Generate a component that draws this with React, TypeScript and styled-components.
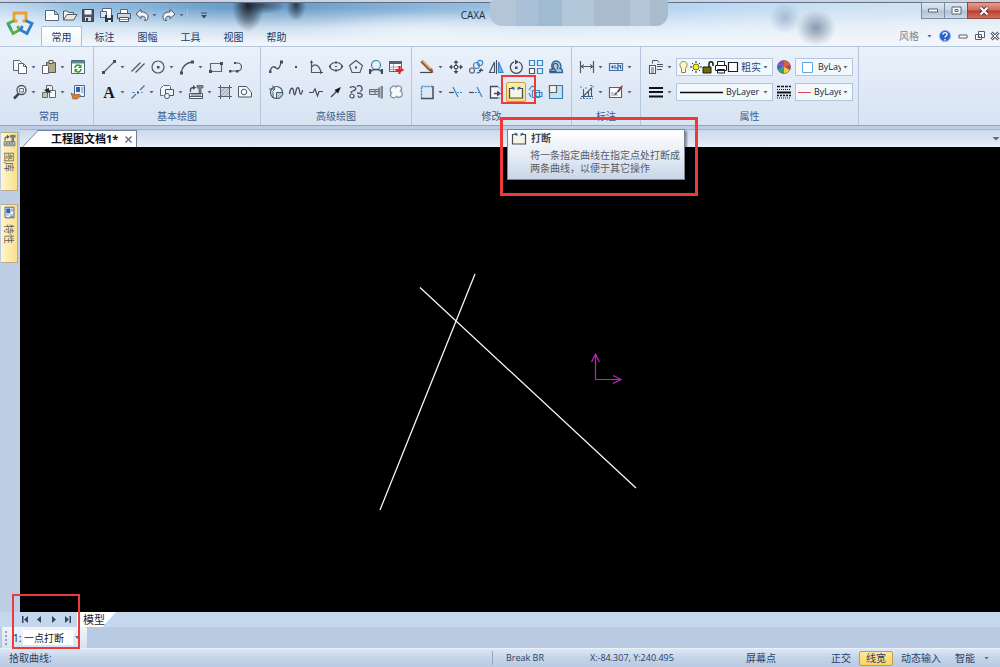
import React from 'react';
import styled, { createGlobalStyle, css } from 'styled-components';

const GlobalStyle = createGlobalStyle`
  *, *::before, *::after { box-sizing: border-box; }
  html, body, #root { margin: 0; padding: 0; }
  body { background: #bccde4; }
  body, button, select {
    font-family: "Open Sans", "Noto Sans CJK SC", sans-serif;
    font-size: 10px;
    line-height: 14px;
    color: #2b4166;
  }
  button, select { margin: 0; padding: 0; border: 0; background: none; }
`;

const ink = '#434c58';
const blue = '#3a86ca';

/* ---------- icon drawings, 16 x 16 ---------- */

const icons: Record<string, React.ReactNode> = {
  newFile: (
    <path d="M1.5 3.5h9l4 4v6h-13zM10.5 3.5v4h4" fill="#fff" stroke="#59677c" />
  ),
  open: (
    <>
      <path d="M1.5 13V4h4l1 1.500h5V8" fill="#f4f4f0" stroke="#4f5a68" />
      <path d="M1.500 13L5 7.500h10L11.500 13z" fill="#e9e9e2" stroke="#4f5a68" />
    </>
  ),
  save: (
    <>
      <path d="M2.500 2.500h11v12h-11z" fill="#4c5564" stroke="#39424f" />
      <path d="M4.500 3h7v4.500h-7z" fill="#f3f5f8" />
      <path d="M5 10h6v4H5z" fill="#d4d9e0" />
      <path d="M6 11h2v3H6z" fill="#39424f" />
    </>
  ),
  saveAs: (
    <>
      <path d="M4.500 1.500h9v8h-9z" fill="#fff" stroke="#59677c" />
      <path d="M2.500 4.500h6v6h-6z" fill="#dfe5ec" stroke="#59677c" />
      <path d="M7 8h8v7H7z" fill="#2d3849" />
      <path d="M9 8h4v3H9zM10 13h3v2h-3z" fill="#e8edf4" />
    </>
  ),
  print: (
    <>
      <path d="M4.500 6V2.500h7V6" fill="#fff" stroke="#5b6573" />
      <path d="M1.500 6.500h13v5h-13z" fill="#cfd6de" stroke="#4b5563" />
      <path d="M3.500 10.500h9v4h-9z" fill="#fff" stroke="#4b5563" />
      <path d="M4 12h8v1H4z" fill="#36a9c6" />
    </>
  ),
  undo: (
    <path d="M2 7l5-4.500v2.500c4 0 7 1.500 7 5 0 1.500-.5 3-2 3.500h-1.500c1-1 1.200-2 .5-3-1-1.200-2-1.300-4-1.300v2.300z" fill="#f2f6fa" stroke="#49566a" />
  ),
  redo: (
    <path d="M14 7L9 2.500V5C5 5 2 6.500 2 10c0 1.500.5 3 2 3.500h1.500c-1-1-1.200-2-.5-3 1-1.200 2-1.300 4-1.300v2.300z" fill="#f2f6fa" stroke="#49566a" />
  ),
  copy: (
    <>
      <path d="M1.500 1.500h6l2 2v8h-8z" fill="#f5f8fc" stroke="#5e6670" />
      <path d="M6.500 4.500h5l3 3v7h-8z" fill="#fff" stroke="#5e6670" />
      <path d="M11.500 4.500v3h3" fill="none" stroke="#5e6670" />
    </>
  ),
  paste: (
    <>
      <path d="M5.500 3.500h9v10h-9z" fill="#b5a98c" stroke="#5d564a" />
      <path d="M8 1.500h4v3H8z" fill="#e9e6dc" stroke="#5d564a" />
      <path d="M1.500 6.500h5l1 1v7h-6z" fill="#fff" stroke="#5e6670" />
    </>
  ),
  refresh: (
    <>
      <path d="M1.500 1.500h13v13h-13z" fill="#fff" stroke="#4f6a78" />
      <path d="M2 2h12v2.500H2z" fill="#5e8593" />
      <path d="M5 9a3 3 0 0 1 5-2.200M11 10a3 3 0 0 1-5 2.200" fill="none" stroke="#20a02c" strokeWidth="1.600" />
      <path d="M11.500 5v4H8zM4.500 14v-4H8z" fill="#20a02c" />
    </>
  ),
  zoom: (
    <>
      <path d="M7 9.500L2 14.500" stroke="#3c4148" strokeWidth="2.500" />
      <circle cx="9.500" cy="6" r="4.500" fill="#eef4fa" stroke="#4b5057" strokeWidth="1.300" />
      <path d="M7.500 4.500h4v3.500h-4z" fill="none" stroke="#6b7078" />
    </>
  ),
  moveBlock: (
    <>
      <path d="M5.500 1.500h5l1 1.500v5h-6z" fill="#f1eee6" stroke="#5e6670" />
      <path d="M1.500 8.500h5v5h-5z" fill="#c8c0ad" stroke="#5e6670" />
      <path d="M8.500 6.500h6v7h-6z" fill="#fff" stroke="#5e6670" />
      <path d="M3 6l5-2v2l3 3-3-1-1 1z" fill="#24282e" />
    </>
  ),
  brush: (
    <>
      <path d="M4.500 1.500h10v11h-10z" fill="#eaf2fc" stroke="#4b6a98" />
      <path d="M6 3h4v5H6z" fill="#2f65b0" />
      <path d="M11 4h2.500M11 6h2.500M11 8h2.500" stroke="#6a86b0" />
      <path d="M1 9l4 2 4-1 2 2-4 3H3z" fill="#d98032" stroke="#8a4a14" strokeWidth=".6" />
    </>
  ),
  line: (
    <>
      <path d="M2.500 13.500l11-11" stroke="#5e6977" strokeWidth="1.300" />
      <path d="M1 12h3v3H1zM12 1h3v3h-3z" fill={ink} />
    </>
  ),
  parallel: (
    <path d="M1.500 12.500l9-9M5.500 13.500l9-9" stroke="#4d5866" strokeWidth="1.300" />
  ),
  circle: (
    <>
      <circle cx="8" cy="8" r="6" fill="none" stroke="#4d5866" strokeWidth="1.200" />
      <path d="M7 7h2.500v2.500H7z" fill={ink} />
    </>
  ),
  arc: (
    <>
      <path d="M2 14C3 8 7 4 13 3" fill="none" stroke="#4d5866" strokeWidth="1.300" />
      <path d="M1 12.500h3v3H1zM12 1.500h3v3h-3z" fill={ink} />
    </>
  ),
  rect: (
    <>
      <path d="M2.500 4.500h11v8h-11z" fill="#e6ecf3" stroke="#5e6977" strokeWidth="1.200" />
      <path d="M1 11h3v3H1zM12 3h3v3h-3z" fill={ink} />
    </>
  ),
  polyline: (
    <>
      <path d="M7 4h2.500a4 4 0 0 1 0 8H2" fill="none" stroke="#4d5866" strokeWidth="1.200" />
      <path d="M6 3h2v2H6zM1 11h2.500v2.500H1zM8 11h2.500v2.500H8z" fill={ink} />
    </>
  ),
  text: (
    <text x="8" y="14" textAnchor="middle" fontFamily="Liberation Serif, serif" fontWeight="700" fontSize="16" fill="#15181d">A</text>
  ),
  centerLine: (
    <>
      <path d="M1.500 14.500l4.500-4.500M10 6l4.500-4.500" stroke="#5b6b80" strokeWidth="1.200" />
      <path d="M7 7.500h2v2H7z" fill="#1d4f94" />
      <path d="M2 8.500h3M11 8.500h2" stroke={blue} strokeWidth=".8" />
    </>
  ),
  offset: (
    <>
      <path d="M4.500 11.500h-3v-7l3-3h6l1 1v3" fill="#f4f8fc" stroke="#5e6977" />
      <path d="M6.500 5.500h8v6h-8z" fill="#eef3f9" stroke="#4d5866" />
      <circle cx="8" cy="12" r="2.500" fill="#f4f8fc" stroke="#4d5866" />
    </>
  ),
  library: (
    <>
      <path d="M2.500 8V5.500C2.500 4 3.500 3.500 6 3.500" fill="none" stroke={ink} strokeWidth="1.300" />
      <path d="M5 1l3 2.500L5 6z" fill={ink} />
      <path d="M9 1.500h6v2.500h-2v5h-2V4H9z" fill="#7d8792" stroke="#59626e" strokeWidth=".8" />
      <path d="M1.500 9.500h13v5h-13z" fill="#f7f9fb" stroke="#4d5866" />
      <path d="M2 12.500h12M4 10v2M6 10v2M8 10v2M10 10v2M12 10v2" stroke="#4d5866" />
    </>
  ),
  hatch: (
    <>
      <path d="M3.500 3.500h9v9h-9z" fill="#ccd3db" />
      <path d="M4 8l4-4M4 12l8-8M8 12l4-4" stroke="#98a2ae" />
      <path d="M3.500 1v14M12.500 1v14M1 3.500h14M1 12.500h14" stroke="#59626e" />
    </>
  ),
  outline: (
    <>
      <path d="M1.500 2.500h8l5 6v4.500h-13z" fill="#f6f9fc" stroke="#4d5866" />
      <circle cx="7" cy="8" r="2.800" fill="none" stroke="#4d5866" />
    </>
  ),
  spline: (
    <>
      <path d="M2 13C3 7 6 7 8 9s4 0 5-6" fill="none" stroke={ink} strokeWidth="1.300" />
      <path d="M1 11.500h2.500V14H1zM12 1.500h3v3h-3z" fill={ink} />
    </>
  ),
  point: <path d="M7 7h2v2H7z" fill={ink} />,
  axes: (
    <>
      <path d="M3.500 2v11.500H15M3.500 8C7 4 11 6 13 13" fill="none" stroke="#4d5866" strokeWidth="1.200" />
      <path d="M2 4l1.500-3L5 4zM12 12l3 1.500-3 1.500z" fill={ink} />
    </>
  ),
  ellipse: (
    <>
      <ellipse cx="8" cy="7.500" rx="6" ry="4" fill="none" stroke="#4d5866" strokeWidth="1.200" />
      <path d="M7 2.500h2v2H7zM1 6.500h2v2H1zM13 6.500h2v2h-2zM7 7h2v1H7zM7 10.500h2v2H7z" fill={ink} />
    </>
  ),
  polygon: (
    <>
      <path d="M8 1.500l6.500 5-2.500 7H4l-2.500-7z" fill="none" stroke="#4d5866" strokeWidth="1.100" />
      <path d="M7 7.500h2v2H7z" fill={ink} />
    </>
  ),
  tangent: (
    <>
      <circle cx="8" cy="6" r="4.500" fill="#e8f2fb" stroke="#3f7fa8" strokeWidth="1.200" />
      <path d="M2.500 14c0-2.500 2-3.500 5.500-3.500s5.500 1 5.500 3.500" fill="none" stroke="#4d5866" strokeWidth="1.300" />
      <path d="M1 10h2v5H1zM13 10h2v5h-2z" fill={ink} />
    </>
  ),
  tableAdd: (
    <>
      <path d="M1.500 2.500h12v10h-12z" fill="#fff" stroke="#59626e" />
      <path d="M1 2h13v3H1z" fill="#59626e" />
      <path d="M2 8h11M2 10.500h7M5.500 5v7" stroke="#9aa3ae" />
      <path d="M11.500 7v8M7.500 11h8" stroke="#e0242b" strokeWidth="2.200" />
    </>
  ),
  localView: (
    <>
      <circle cx="8.500" cy="8.500" r="6" fill="#e9f1f8" stroke="#4d5866" strokeWidth="1.200" />
      <path d="M8.500 8.500H15A6 6 0 0 1 8.500 14.500z" fill="#a6d3df" stroke="#4d5866" />
      <path d="M1 5h5M4.500 1.500L7 5 4.500 7.500M5 8v6" fill="none" stroke="#4d5866" />
    </>
  ),
  wave: (
    <path d="M1.500 10C2 4 5 2 5.500 7s1.500 5 2.500 0S11 3 11.500 7s2 5 3-1" fill="none" stroke={ink} strokeWidth="1.300" />
  ),
  breakLine: (
    <path d="M1 8.500h4L7 5l2.500 7 1.500-4.500h4" fill="none" stroke={ink} strokeWidth="1.200" />
  ),
  arrow: (
    <>
      <path d="M3 13l6-6" stroke={ink} strokeWidth="1.400" />
      <path d="M13 3L6.500 6l3.500 3.500z" fill="#14171c" />
    </>
  ),
  gear: (
    <>
      <path d="M2 4a3 2 0 1 1 4 2.500C3 8 2 8 4 9M9 2.500a3 3 0 1 1 3 5M9 9c3 0 6 1 5 3s-4 2-4-.5" fill="none" stroke={ink} strokeWidth="1.300" />
      <circle cx="4" cy="12" r="2" fill="#fff" stroke={ink} strokeWidth="1.200" />
    </>
  ),
  bolt: (
    <>
      <path d="M1.500 5.500h9v5h-9z" fill="#cfd6de" stroke="#67717d" />
      <path d="M10 3.500h2v10h-2zM12.500 2h2.500v12.500h-2.500z" fill="#7f8994" />
      <path d="M2 7.500h8M7 6v4" stroke="#67717d" />
    </>
  ),
  cloud: (
    <path d="M4.500 2.500c2-1.500 3.500 0 3.500.5 1-1.500 5-1.500 5.500 1 .3 1.500-.5 2.500-1 3 2 1 2.500 4 .5 5.500s-4 .5-4.500 0c-1 1.500-4 2-5.500 0-1-1.500 0-3 .5-3.500-2-1.500-2-5 1-6.500z" fill="#f7fafc" stroke="#7d8691" strokeWidth="1.200" />
  ),
  erase: (
    <>
      <path d="M2.500 2l9 9" stroke="#9c5e2a" strokeWidth="3.400" />
      <path d="M3.500 1.500l9 9" stroke="#ecc08a" strokeWidth="1.200" />
      <path d="M10 11.500l3-2.500 1.500 4.500-2 .5z" fill="#8c5a48" />
      <path d="M1 13.500h12" stroke={ink} strokeWidth="1.200" />
    </>
  ),
  move: (
    <>
      <path d="M8 2v12M2 8h12" stroke={ink} strokeWidth="1.200" />
      <path d="M5.500 4L8 1l2.500 3zM5.500 12L8 15l2.500-3zM4 5.500L1 8l3 2.500zM12 5.500L15 8l-3 2.500z" fill={ink} />
      <path d="M6.500 6.500h3v3h-3z" fill="#fff" stroke={ink} />
    </>
  ),
  duplicate: (
    <>
      <circle cx="4" cy="11.500" r="2.500" fill="none" stroke="#59626e" strokeWidth="1.200" />
      <circle cx="8.500" cy="6.500" r="3" fill="#e4f0fc" stroke={blue} strokeWidth="1.200" />
      <circle cx="12" cy="4" r="2.700" fill="none" stroke={blue} strokeWidth="1.200" />
      <path d="M8.500 14c3 0 4.500-1 4.500-3.500M11 12l2-2 2 2" fill="none" stroke={ink} strokeWidth="1.100" />
    </>
  ),
  mirror: (
    <>
      <path d="M6.500 3v10.500h-5z" fill="none" stroke="#4d5866" strokeWidth="1.200" />
      <path d="M10.500 3v10.500h4.500z" fill="#7db4ea" stroke={blue} strokeWidth="1.200" />
      <path d="M8.500 1v14" stroke={ink} />
    </>
  ),
  rotate: (
    <>
      <path d="M6 2.800A6 6 0 1 0 11 3" fill="none" stroke={ink} strokeWidth="1.300" />
      <path d="M7 .5l4 2.500-4 2.500zM7 7.500h2.500V10H7z" fill={ink} />
    </>
  ),
  array: (
    <>
      <path d="M1.500 1.500h5v5h-5zM9.500 1.500h5v5h-5zM9.500 9.500h5v5h-5z" fill="#e4f0fc" stroke={blue} strokeWidth="1.200" />
      <path d="M1.500 9.500h5v5h-5z" fill="#fff" stroke="#4d5866" strokeWidth="1.200" />
    </>
  ),
  stamp: (
    <>
      <path d="M2 13.500v-3h3C2 6 5 2 8 2s6.500 3.500 4 7.500c2 0 2.500 1 2.500 4z" fill="#a9cdee" stroke="#35608f" strokeWidth="1.300" />
      <path d="M1.500 12.500H8c0-2-3-3-3-5.500a2.500 2.500 0 0 1 5 0c0 2-1 2-1 3.500" fill="none" stroke={ink} strokeWidth="1.100" />
    </>
  ),
  stretchBox: (
    <>
      <path d="M2.500 14.500v-12h12" fill="none" stroke={blue} strokeWidth="1.500" strokeDasharray="2 1" />
      <path d="M14 2v12.500H2" fill="none" stroke={ink} strokeWidth="1.500" />
    </>
  ),
  trim: (
    <>
      <path d="M5 3l5 10" stroke={blue} strokeWidth="1.200" />
      <path d="M1 8.500h5" stroke={ink} strokeWidth="1.200" />
      <path d="M9 8.500h6" stroke={blue} strokeWidth="1.200" strokeDasharray="2 1" />
    </>
  ),
  extend: (
    <>
      <path d="M9 3l5 10" stroke={blue} strokeWidth="1.200" />
      <path d="M1 8.500h5" stroke={ink} strokeWidth="1.200" />
      <path d="M7 8.500h4" stroke={blue} strokeWidth="1.200" strokeDasharray="2 1" />
    </>
  ),
  stretch: (
    <>
      <path d="M10 2.500H2.500v11.500H10" fill="#f4f8fc" stroke={ink} strokeWidth="1.300" />
      <path d="M10 2.500l4 4v7.500h-4" fill="none" stroke={blue} strokeDasharray="2 1" />
      <path d="M6 9.500h4" stroke={ink} strokeWidth="1.500" />
      <path d="M9 6.500l4 3-4 3z" fill={ink} />
    </>
  ),
  break: (
    <>
      <path d="M4 4.500H1.500v9.500h13V4.500H12" fill="#f6f4e6" stroke="#454b52" strokeWidth="1.200" />
      <path d="M3.500 2.500l3 1v2.500L4 5zM12.500 2.500l-3 1v2.500L12 5z" fill="#1f6cb8" />
    </>
  ),
  rotateView: (
    <>
      <path d="M4.500 6.500h7v7h-7z" fill="#e4f0fc" stroke={blue} strokeWidth="1.200" />
      <path d="M1 6l3-4 4 2M8 8.500h6v4H8zM1 9l2 4" fill="none" stroke={blue} strokeWidth="1.200" />
    </>
  ),
  scale: (
    <>
      <path d="M1.500 1.500h13v13h-13z" fill="#c3e2f7" stroke="#3f7fae" strokeWidth="1.200" />
      <path d="M1.500 1.500h7v7h-7z" fill="#f2f2ea" stroke="#59626e" strokeWidth="1.200" />
    </>
  ),
  dimension: (
    <>
      <path d="M1.500 2v12M14.500 2v12" stroke="#4d5866" strokeWidth="1.200" />
      <path d="M2 7.500h12M5 5.500l-3 2 3 2M11 5.500l3 2-3 2" fill="none" stroke="#4d5866" />
    </>
  ),
  tolerance: (
    <>
      <path d="M1.500 4.500h13v7h-13z" fill="#dce9f8" stroke="#4d6f9e" strokeWidth="1.200" />
      <path d="M3 8h3M4.500 6.500v3M7 6v4M9 6h2v2H9v2h2M12.500 6v4" fill="none" stroke="#2f5f9e" />
    </>
  ),
  coordinate: (
    <>
      <path d="M4.500 5v9M2 12.500h12M4.500 12l5-5v6M9.500 7l3-3v9" fill="none" stroke="#4d5866" strokeWidth="1.100" />
      <path d="M1 3h3M6 4h2M11 1.500h3v2M1 14.500h13" fill="none" stroke={blue} strokeDasharray="2 1" />
    </>
  ),
  editDim: (
    <>
      <path d="M1.500 3.500h12v10h-12z" fill="#fff" stroke="#59626e" strokeWidth="1.200" />
      <path d="M3 11h7M3 9h3" stroke="#8d97a3" />
      <path d="M14.500 1l-3 2.500L8 9l3-1 3.500-5z" fill="#7b4438" />
      <path d="M8 8l-2 3 3-1z" fill="#2d3036" />
    </>
  ),
  layers: (
    <>
      <path d="M1.500 6.500h6v8h-6z" fill="#fff" stroke="#4d5866" strokeWidth="1.100" />
      <path d="M3 9h3M3 11h3M3 13h3" stroke="#4d5866" />
      <path d="M4.500 4.500v-3h5l1.500 2M9 5.500h6M9 7.500h6M9 10.500h5" fill="none" stroke="#4d5866" />
    </>
  ),
  lineWidth: (
    <path d="M1 4h14M1 8h14M1 12.500h14" stroke="#101215" strokeWidth="2" />
  ),
  lineType: (
    <>
      <path d="M1 2.500h14" stroke="#101215" strokeWidth="1.500" strokeDasharray="3 1" />
      <path d="M1 5.500h14M1 14h14" stroke="#101215" strokeWidth="1.200" strokeDasharray="1 1" />
      <path d="M1 8.500h14" stroke="#101215" strokeWidth="2" />
      <path d="M1 11.500h14" stroke="#101215" strokeWidth="1.500" strokeDasharray="2 1" />
    </>
  ),
  colorWheel: (
    <>
      <path d="M8 8V1.500A6.500 6.500 0 0 1 13.600 4.800z" fill="#e0612f" />
      <path d="M8 8V1.500A6.500 6.500 0 0 0 2 5z" fill="#8a4fb0" />
      <path d="M8 8L2 5a6.500 6.500 0 0 0 0 6z" fill="#3f62c8" />
      <path d="M8 8l-6 3a6.500 6.500 0 0 0 6 3.500z" fill="#35a56c" />
      <path d="M8 8v6.500a6.500 6.500 0 0 0 6-3.500z" fill="#e9d23b" />
      <path d="M8 8l6 3a6.500 6.500 0 0 0-.4-6.200z" fill="#d03a48" />
      <circle cx="8" cy="8" r="6.500" fill="none" stroke="#6b5a66" strokeWidth=".7" />
    </>
  ),
  properties: (
    <>
      <path d="M2.500 1.500h11v13h-11z" fill="#f6f8fb" stroke="#4d6384" strokeWidth="1.200" />
      <path d="M4 3h5v6H4z" fill="#2f65b0" />
      <path d="M10 4h2.500M10 6h2.500M4 11h3M8.500 11h4M8.500 13h4" stroke="#5d7190" />
    </>
  ),
};

const Glyph = styled.svg`
  display: block;
  flex: none;
`;

function Icon({ name, size = 16 }: { name: string; size?: number }) {
  return (
    <Glyph width={size} height={size} viewBox="0 0 16 16" fill="none" aria-hidden="true">
      {icons[name]}
    </Glyph>
  );
}

const Caret = styled.span`
  flex: none;
  width: 5px;
  height: 3px;
  margin: 0 2px;
  background: #5d6b80;
  clip-path: polygon(0 0, 100% 0, 50% 100%);
  pointer-events: none;
`;

/* ---------- window frame ---------- */

const Frame = styled.div`
  min-height: 100vh;
  display: flex;
  flex-direction: column;
  background: #bccde4;
`;

const Header = styled.header`
  display: grid;
  grid-template-columns: 40px 1fr;
  height: 47px;
  border-bottom: 1px solid #b4c6dc;
  background:
    linear-gradient(#c9d3e2 0 2px, #5f7086 2px 3px, transparent 3px),
    radial-gradient(ellipse 16px 26px at 248px 6px, rgba(24, 28, 34, .9), rgba(30, 36, 44, .5) 50%, transparent),
    radial-gradient(ellipse 26px 9px at 262px 5px, rgba(40, 50, 62, .7), transparent),
    radial-gradient(ellipse 10px 16px at 296px 5px, rgba(36, 42, 50, .85), transparent),
    radial-gradient(ellipse 20px 18px at 816px 28px, rgba(96, 116, 142, .7), transparent),
    radial-gradient(ellipse 16px 16px at 785px 18px, rgba(120, 146, 176, .5), transparent),
    radial-gradient(ellipse 90px 52px at 0 40px, rgba(232, 242, 252, .95), transparent),
    radial-gradient(ellipse 120px 22px at 420px 34px, rgba(240, 246, 252, .7), transparent),
    linear-gradient(rgba(242, 246, 251, 0) 8px, rgba(242, 246, 251, .75) 28px, rgba(242, 246, 251, 1) 44px),
    linear-gradient(90deg, #a9cbe8 0, #8db9de 12%, #6a9ecb 22%, #6d9fcb 30%, #8ab5da 42%, #a4c7e6 55%, #bdd9f3 72%, #cfe2f3 85%, #d5e2ef 100%);
`;

const AppButton = styled.button`
  display: flex;
  align-items: center;
  justify-content: center;
  height: 46px;
`;

const HeaderRows = styled.div`
  display: flex;
  flex-direction: column;
  min-width: 0;
`;

const TitleRow = styled.div`
  display: flex;
  height: 26px;
`;

const QuickBar = styled.div`
  display: flex;
  align-items: center;
  padding: 4px 0 0 3px;
`;

const QuickButton = styled.button`
  display: flex;
  align-items: center;
  height: 20px;
  padding: 0 1px;
`;

const QuickDivider = styled.span`
  width: 1px;
  height: 12px;
  margin: 0 12px 0 0;
  background: #a9c2dc;
`;

const Title = styled.div`
  flex: 1;
  display: flex;
  justify-content: center;
  gap: 5px;
  color: #1f2d40;
  line-height: 30px;
`;

const Redaction = styled.span`
  width: 178px;
  height: 26px;
  border-radius: 4px 0 12px 12px;
  background: linear-gradient(90deg, #b3c6d8 0 26px, #a9c0d6 26px 48px, #a0bad2 48px 72px, #b1c6d9 72px 104px, #a9bdcf 104px 140px, #b4c6d6 140px 160px, #a9bdcf 160px);
`;

const WindowControls = styled.div`
  display: flex;
  height: 19px;
  padding-top: 2px;
`;

const WindowButton = styled.button<{ $close?: boolean }>`
  display: flex;
  align-items: center;
  justify-content: center;
  width: ${p => (p.$close ? 33 : 23)}px;
  border: 1px solid ${p => (p.$close ? '#8c4a42' : '#7c8ba0')};
  border-width: 1px 0 1px 1px;
  background: ${p =>
    p.$close
      ? 'linear-gradient(#dfa097, #cf6657 48%, #b93d2c 52%, #d1705c)'
      : 'linear-gradient(#dfe8f2, #c6d3e2 48%, #b0c1d4 52%, #cbd8e6)'};
`;

const TabRow = styled.nav`
  display: flex;
  align-items: stretch;
  height: 20px;
`;

const RibbonTab = styled.button<{ $active?: boolean }>`
  width: 41px;
  margin: 0 1px;
  border: 1px solid transparent;
  border-bottom: 0;
  color: #1e3a66;
  ${p =>
    p.$active &&
    css`
      border-color: #a9bfd9;
      border-radius: 2px 2px 0 0;
      background: linear-gradient(#ffffff, #f0f5fb);
    `}
`;

const ChildControls = styled.div`
  display: flex;
  align-items: center;
  gap: 4px;
  margin-left: auto;
`;

const StyleButton = styled.button`
  display: flex;
  align-items: center;
  gap: 6px;
  color: #7a8798;
`;

const SmallButton = styled.button`
  display: flex;
  align-items: center;
  height: 14px;
`;

/* ---------- ribbon ---------- */

const Ribbon = styled.section`
  display: flex;
  padding-left: 5px;
  border-bottom: 1px solid #8fa6c6;
  background: linear-gradient(#eaf2fb, #e2ebf7 40%, #d8e4f2);
`;

const Group = styled.div`
  display: flex;
  flex-direction: column;
  gap: 1px;
  padding: 8px 5px 2px;
  border-right: 1px solid #b4c6dc;
`;

const GroupRow = styled.div`
  display: flex;
  align-items: center;
  height: 24px;
`;

const PropertyRow = styled(GroupRow)`
  gap: 1px;
`;

const GroupLabel = styled.div`
  padding-top: 4px;
  text-align: center;
  color: #3e5c8e;
`;

const ToolButton = styled.button<{ $active?: boolean }>`
  display: flex;
  align-items: center;
  height: 20px;
  padding: 0 2px;
  ${p =>
    p.$active &&
    css`
      padding: 0 1px;
      border: 1px solid #c9a13c;
      border-radius: 2px;
      background: linear-gradient(#fdf0b8, #fbd968);
    `}
`;

const ActiveTool = styled.div`
  position: relative;
`;

const ToolCaret = styled(Caret)`
  margin: 0 1px 0 3px;
`;

const Combo = styled.label<{ $wide?: boolean }>`
  display: flex;
  align-items: center;
  width: ${p => (p.$wide ? 97 : 58)}px;
  height: 18px;
  padding: 0 2px;
  border: 1px solid #b3c6de;
  background: #f3f8fd;
`;

const Select = styled.select<{ $latin?: boolean }>`
  appearance: none;
  flex: 1;
  min-width: 0;
  padding-left: 1px;
  font-size: ${p => (p.$latin ? 9 : 10)}px;
  color: ${p => (p.$latin ? '#20262e' : '#2b4b80')};
  outline: 0;
`;

/* ---------- tooltip and marks ---------- */

const Mark = styled.div`
  position: absolute;
  z-index: 3;
  border: 2px solid #ec3a3c;
  pointer-events: none;
`;

const ToolMark = styled(Mark)`
  inset: -7px -10px -2px -5px;
`;

const TipMark = styled(Mark)`
  top: 35px;
  left: -6px;
  width: 198px;
  height: 79px;
  border-width: 3px;
`;

const OptionMark = styled(Mark)`
  left: 12px;
  bottom: 18px;
  width: 68px;
  height: 55px;
`;

const Tooltip = styled.div`
  position: absolute;
  z-index: 2;
  top: 47px;
  left: 1px;
  width: 178px;
  padding: 0 3px 4px 3px;
  border: 1px solid #7b8694;
  background: linear-gradient(#ffffff, #e6edf6 50%, #c9d6e8);
  box-shadow: 2px 2px 2px rgba(0, 0, 0, .4);
  color: #5a5d64;
`;

const TipTitle = styled.div`
  display: flex;
  align-items: center;
  gap: 4px;
  height: 16px;
  font-weight: 700;
  color: #45484e;
`;

const TipBody = styled.p`
  margin: 3px 0 0 19px;
  line-height: 13px;
  white-space: nowrap;
`;

/* ---------- workspace ---------- */

const Workspace = styled.main`
  flex: 1;
  display: flex;
  padding-top: 3px;
`;

const Rail = styled.aside`
  display: flex;
  flex-direction: column;
  gap: 13px;
  width: 20px;
  padding: 3px 2px 0 1px;
`;

const RailTab = styled.button`
  display: flex;
  flex-direction: column;
  align-items: center;
  gap: 5px;
  height: 59px;
  padding-top: 1px;
  border: 1px solid #b9ad84;
  border-left: 0;
  background: linear-gradient(90deg, #fff6d2, #fbdf8c);
  color: #5c5c54;
`;

const RailText = styled.span`
  writing-mode: vertical-rl;
  text-orientation: sideways;
`;

const Stage = styled.div`
  flex: 1;
  display: flex;
  flex-direction: column;
  min-width: 0;
`;

const DocStrip = styled.div`
  display: flex;
  align-items: flex-end;
  justify-content: space-between;
  height: 18px;
  padding: 0 0 0 2px;
  border-top: 1px solid #9fb4d0;
  background: linear-gradient(#cbdaec, #e6eef8);
`;

const DocTab = styled.div`
  position: relative;
  display: flex;
  align-items: center;
  gap: 5px;
  height: 17px;
  margin-left: 16px;
  padding: 0 2px 0 13px;
  border: 1px solid #6f819b;
  border-width: 1px 1px 0 0;
  background: #fff;

  &::before {
    content: '';
    position: absolute;
    top: -1px;
    left: -8px;
    width: 16px;
    height: 17px;
    border: 1px solid #6f819b;
    border-width: 1px 0 0 1px;
    background: #fff;
    transform: skewX(-43deg);
  }
`;

const DocName = styled.span`
  position: relative;
  font-size: 11px;
  font-weight: 700;
  color: #10141a;
`;

const CloseTab = styled.button`
  display: flex;
  padding: 2px;
`;

const StripMenu = styled.button`
  display: flex;
  align-items: center;
  height: 17px;
`;

const StripCaret = styled(Caret)`
  width: 8px;
  height: 4px;
  margin: 0;
`;

const Canvas = styled.div`
  flex: 1;
  display: flex;
  background: #000;
`;

const Drawing = styled.svg`
  display: block;
  width: 100%;
  height: auto;
`;

/* ---------- bottom bars ---------- */

const Footer = styled.footer`
  position: relative;
`;

const ModelRow = styled.div`
  display: flex;
  height: 15px;
  padding-left: 18px;
  background: #c5d7ec;
`;

const NavButton = styled.button`
  display: flex;
  align-items: center;
  justify-content: center;
  width: 14px;
`;

const ModelTab = styled.button`
  width: 39px;
  margin-left: 3px;
  padding: 0 0 0 6px;
  text-align: left;
  font-size: 11px;
  color: #1b2638;
  background: #fff;
  clip-path: polygon(0 0, 100% 0, 66% 100%, 0 100%);
`;

const OptionRow = styled.div`
  display: flex;
  height: 21px;
  padding-left: 2px;
  background: #b9cbe3;
`;

const OptionBar = styled.div`
  display: flex;
  align-items: center;
  width: 85px;
  padding-left: 3px;
  border-radius: 0 2px 2px 0;
  background: linear-gradient(#f1f5fb, #d7e3f1);
`;

const Grip = styled.span`
  width: 2px;
  height: 14px;
  margin-right: 6px;
  background: repeating-linear-gradient(#8fa3c0 0 2px, transparent 2px 4px);
`;

const OptionLabel = styled.label`
  width: 10px;
  color: #111;
`;

const OptionSelect = styled(Select)`
  flex: none;
  width: 50px;
  height: 15px;
  background: #fff;
  color: #15181d;
`;

const StatusBar = styled.div`
  display: flex;
  align-items: center;
  height: 19px;
  border-top: 1px solid #e9f1f9;
  background: linear-gradient(#dbe7f4, #c4d4e8 50%, #b9cbe2);
`;

const Prompt = styled.span`
  flex: 1;
  padding-left: 9px;
`;

const StatusCell = styled.span<{ $width: number; $latin?: boolean }>`
  width: ${p => p.$width}px;
  font-size: ${p => (p.$latin ? 9 : 10)}px;
  white-space: nowrap;
`;

const StatusDivider = styled.span`
  width: 1px;
  height: 14px;
  margin-right: 13px;
  background: #93a8c5;
`;

const StatusButton = styled.button<{ $on?: boolean }>`
  display: flex;
  align-items: center;
  height: 15px;
  padding: 0 7px;
  ${p =>
    p.$on &&
    css`
      margin: 0 1px;
      padding: 0 6px;
      border: 1px solid #c99b45;
      border-radius: 2px;
      background: linear-gradient(#fde9a0, #fcd25d);
    `}
`;

const SplitStatus = styled(StatusButton)`
  gap: 7px;
  padding-right: 9px;
`;

/* ---------- pieces ---------- */

type ToolSpec = [icon: string, label: string, split?: boolean];

function Tools({ items }: { items: ToolSpec[] }) {
  return (
    <>
      {items.map(([icon, label, split]) => (
        <ToolButton key={icon} type="button" aria-label={label}>
          <Icon name={icon} />
          {split && <ToolCaret />}
        </ToolButton>
      ))}
    </>
  );
}

function ToolGroup({ label, rows }: { label: string; rows: ToolSpec[][] }) {
  return (
    <Group>
      {rows.map((row, i) => (
        <GroupRow key={i}>
          <Tools items={row} />
        </GroupRow>
      ))}
      <GroupLabel>{label}</GroupLabel>
    </Group>
  );
}

function Logo() {
  return (
    <svg width="28" height="28" viewBox="0 0 28 28" fill="none" aria-hidden="true">
      <path d="M11.500 12H8V4h12v8h-3.500" stroke="#f0a030" strokeWidth="2.800" />
      <path d="M8.500 11.500L2 14.500l5 10L13.500 21l-2-4" stroke="#5fb044" strokeWidth="2.800" />
      <path d="M2 14.500l3 6" stroke="#3f9aa8" strokeWidth="2.800" />
      <path d="M19.500 11.500l6.500 3-5 10L14.500 21l2-4" stroke="#2f7fc6" strokeWidth="2.800" />
    </svg>
  );
}

function LayerArt() {
  return (
    <Glyph width="61" height="14" viewBox="0 0 61 14" fill="none" aria-hidden="true">
      <path d="M2.500 8.500C-1 4 2 1.500 4.500 1.500S10 4 6.500 8.500v4h-4z" fill="#fbf7c4" stroke="#8a8450" />
      <circle cx="17" cy="7" r="3" fill="#f4ee2a" stroke="#6b6a10" />
      <path d="M17 1v2M17 11v2M11 7h2M21 7h2M13 3l1 1M20 10l1 1M13 11l1-1M20 4l1-1" stroke="#222" />
      <path d="M24 7h8v6h-8z" fill="#6f6a12" stroke="#1b1b0a" />
      <path d="M30 7V4c0-3 4-3 4 0v2" stroke="#1b1b0a" strokeWidth="1.500" />
      <path d="M38.500 5V1.500h7V5M36.500 5.500h11v5h-11zM38.500 9.500h7v3.500h-7z" fill="#fff" stroke="#1c1f24" />
      <path d="M49.500 2.500h9v9h-9z" fill="#fff" stroke="#1c1f24" strokeWidth="1.200" />
    </Glyph>
  );
}

function NavGlyph({ d }: { d: string }) {
  return (
    <svg width="7" height="7" viewBox="0 0 7 7" aria-hidden="true">
      <path d={d} fill="#33435c" />
    </svg>
  );
}

const ribbonTabs = ['常用', '标注', '图幅', '工具', '视图', '帮助'];

export default function App() {
  return (
    <Frame>
      <GlobalStyle />

      <Header>
        <AppButton type="button" aria-label="CAXA">
          <Logo />
        </AppButton>
        <HeaderRows>
          <TitleRow>
            <QuickBar>
              <QuickButton type="button" aria-label="新建"><Icon name="newFile" /></QuickButton>
              <QuickButton type="button" aria-label="打开"><Icon name="open" /></QuickButton>
              <QuickButton type="button" aria-label="保存"><Icon name="save" /></QuickButton>
              <QuickButton type="button" aria-label="另存为"><Icon name="saveAs" /></QuickButton>
              <QuickButton type="button" aria-label="打印"><Icon name="print" /></QuickButton>
              <QuickButton type="button" aria-label="撤销"><Icon name="undo" /><Caret /></QuickButton>
              <QuickButton type="button" aria-label="恢复"><Icon name="redo" /><Caret /></QuickButton>
              <QuickDivider />
              <QuickButton type="button" aria-label="自定义">
                <svg width="6" height="7" viewBox="0 0 6 7" aria-hidden="true">
                  <path d="M0 .5h6v1H0zM0 3h6L3 6.500z" fill="#3d4c62" />
                </svg>
              </QuickButton>
            </QuickBar>
            <Title>
              <span>CAXA</span>
              <Redaction />
            </Title>
            <WindowControls>
              <WindowButton type="button" aria-label="最小化">
                <svg width="12" height="5" viewBox="0 0 12 5" aria-hidden="true">
                  <path d="M1.500 1h9v3h-9z" fill="#fff" stroke="#536073" />
                </svg>
              </WindowButton>
              <WindowButton type="button" aria-label="最大化">
                <svg width="11" height="9" viewBox="0 0 11 9" aria-hidden="true">
                  <path d="M1 1h9v7H1zM4 3.500h3v2H4z" fill="#fff" stroke="#536073" />
                </svg>
              </WindowButton>
              <WindowButton type="button" aria-label="关闭" $close>
                <svg width="12" height="10" viewBox="0 0 12 10" aria-hidden="true">
                  <path d="M2.500 1.500l7 7M9.500 1.500l-7 7" stroke="#6a3a38" strokeWidth="4" />
                  <path d="M2.500 1.500l7 7M9.500 1.500l-7 7" stroke="#fff" strokeWidth="2" />
                </svg>
              </WindowButton>
            </WindowControls>
          </TitleRow>
          <TabRow>
            {ribbonTabs.map((name, i) => (
              <RibbonTab key={name} type="button" $active={i === 0}>{name}</RibbonTab>
            ))}
            <ChildControls>
              <StyleButton type="button">风格<Caret /></StyleButton>
              <SmallButton type="button" aria-label="帮助主题">
                <svg width="14" height="14" viewBox="0 0 14 14" aria-hidden="true">
                  <circle cx="7" cy="7" r="5.500" fill="#2a62c8" stroke="#8fb2e6" />
                  <path d="M5 5.500C5 3 9 3 9 5.500 9 7 7 7 7 8.500M7 10v1.500" fill="none" stroke="#fff" strokeWidth="1.400" />
                </svg>
              </SmallButton>
              <SmallButton type="button" aria-label="最小化文档">
                <svg width="14" height="12" viewBox="0 0 14 12" aria-hidden="true">
                  <path d="M3 5h8v3H3z" fill="#fff" stroke="#536073" />
                </svg>
              </SmallButton>
              <SmallButton type="button" aria-label="还原文档">
                <svg width="12" height="12" viewBox="0 0 12 12" aria-hidden="true">
                  <path d="M4.500 1.500h6v6h-6zM1.500 4.500h6v5h-6zM4 6.500h1.500v1H4z" fill="#fff" stroke="#536073" />
                </svg>
              </SmallButton>
              <SmallButton type="button" aria-label="关闭文档">
                <svg width="10" height="10" viewBox="0 0 10 10" aria-hidden="true">
                  <path d="M1.500 1.500l7 7M8.500 1.500l-7 7" stroke="#536073" strokeWidth="3" />
                  <path d="M1.500 1.500l7 7M8.500 1.500l-7 7" stroke="#fff" />
                </svg>
              </SmallButton>
            </ChildControls>
          </TabRow>
        </HeaderRows>
      </Header>

      <Ribbon>
        <ToolGroup
          label="常用"
          rows={[
            [['copy', '复制', true], ['paste', '粘贴', true], ['refresh', '刷新']],
            [['zoom', '缩放', true], ['moveBlock', '平移', true], ['brush', '特性匹配']],
          ]}
        />
        <ToolGroup
          label="基本绘图"
          rows={[
            [['line', '直线', true], ['parallel', '平行线'], ['circle', '圆', true], ['arc', '圆弧', true], ['rect', '矩形'], ['polyline', '多段线']],
            [['text', '文字', true], ['centerLine', '中心线', true], ['offset', '等距线', true], ['library', '图库', true], ['hatch', '剖面线'], ['outline', '填充']],
          ]}
        />
        <ToolGroup
          label="高级绘图"
          rows={[
            [['spline', '样条'], ['point', '点'], ['axes', '公式曲线'], ['ellipse', '椭圆'], ['polygon', '正多边形'], ['tangent', '圆弧拟合'], ['tableAdd', '表格']],
            [['localView', '局部放大'], ['wave', '波浪线'], ['breakLine', '双折线'], ['arrow', '箭头'], ['gear', '齿轮'], ['bolt', '孔轴'], ['cloud', '云线']],
          ]}
        />
        <Group>
          <GroupRow>
            <Tools items={[['erase', '删除', true], ['move', '平移'], ['duplicate', '平移复制'], ['mirror', '镜像'], ['rotate', '旋转'], ['array', '阵列'], ['stamp', '等距']]} />
          </GroupRow>
          <GroupRow>
            <Tools items={[['stretchBox', '过渡', true], ['trim', '裁剪'], ['extend', '延伸'], ['stretch', '拉伸']]} />
            <ActiveTool>
              <ToolButton type="button" aria-label="打断" aria-describedby="break-tip" $active>
                <Icon name="break" />
              </ToolButton>
              <ToolMark />
              <Tooltip role="tooltip" id="break-tip">
                <TipTitle><Icon name="break" />打断</TipTitle>
                <TipBody>将一条指定曲线在指定点处打断成<br />两条曲线，以便于其它操作</TipBody>
              </Tooltip>
              <TipMark />
            </ActiveTool>
            <Tools items={[['rotateView', '分解'], ['scale', '缩放']]} />
          </GroupRow>
          <GroupLabel>修改</GroupLabel>
        </Group>
        <ToolGroup
          label="标注"
          rows={[
            [['dimension', '尺寸标注', true], ['tolerance', '形位公差', true]],
            [['coordinate', '坐标标注', true], ['editDim', '标注编辑', true]],
          ]}
        />
        <Group>
          <PropertyRow>
            <Tools items={[['layers', '图层', true]]} />
            <Combo $wide>
              <LayerArt />
              <Select aria-label="当前图层"><option>粗实</option></Select>
              <Caret />
            </Combo>
            <Tools items={[['colorWheel', '颜色']]} />
            <Combo>
              <Glyph width="19" height="12" viewBox="0 0 19 12" aria-hidden="true">
                <path d="M4.500 1.500h10v10h-10z" fill="#fff" stroke="#5fa8e8" />
              </Glyph>
              <Select aria-label="当前颜色" $latin><option>ByLayer</option></Select>
              <Caret />
            </Combo>
          </PropertyRow>
          <PropertyRow>
            <Tools items={[['lineWidth', '线宽', true]]} />
            <Combo $wide>
              <Glyph width="46" height="12" viewBox="0 0 46 12" aria-hidden="true">
                <path d="M1 6.500h43" stroke="#0c0d0f" strokeWidth="1.500" />
              </Glyph>
              <Select aria-label="当前线宽" $latin><option>ByLayer</option></Select>
              <Caret />
            </Combo>
            <Tools items={[['lineType', '线型']]} />
            <Combo>
              <Glyph width="15" height="12" viewBox="0 0 15 12" aria-hidden="true">
                <path d="M0 6.500h13" stroke="#d8485c" />
              </Glyph>
              <Select aria-label="当前线型" $latin><option>ByLayer</option></Select>
              <Caret />
            </Combo>
          </PropertyRow>
          <GroupLabel>属性</GroupLabel>
        </Group>
      </Ribbon>

      <Workspace>
        <Rail>
          <RailTab type="button"><Icon name="library" size={13} /><RailText>图库</RailText></RailTab>
          <RailTab type="button"><Icon name="properties" size={13} /><RailText>特性</RailText></RailTab>
        </Rail>
        <Stage>
          <DocStrip>
            <DocTab>
              <DocName>工程图文档1*</DocName>
              <CloseTab type="button" aria-label="关闭标签">
                <svg width="7" height="7" viewBox="0 0 7 7" aria-hidden="true">
                  <path d="M.5.5l6 6M6.500.5l-6 6" stroke="#5d6773" strokeWidth="1.200" />
                </svg>
              </CloseTab>
            </DocTab>
            <StripMenu type="button" aria-label="文档列表"><StripCaret /></StripMenu>
          </DocStrip>
          <Canvas>
            <Drawing viewBox="0 0 980 465" role="img" aria-label="绘图区">
              <path d="M455 127L360 363M400 140.500L616 341" stroke="#f4f4f4" strokeWidth="1.300" />
              <path d="M575.500 207v25.500H601M571.500 215l4-8 4 8M593 228.500l8 4-8 4" fill="none" stroke="#c81ccb" strokeWidth="1.200" />
            </Drawing>
          </Canvas>
        </Stage>
      </Workspace>

      <Footer>
        <ModelRow>
          <NavButton type="button" aria-label="第一页"><NavGlyph d="M0 0h1.500v7H0zM6 0v7L2 3.500z" /></NavButton>
          <NavButton type="button" aria-label="上一页"><NavGlyph d="M5 0v7L1 3.500z" /></NavButton>
          <NavButton type="button" aria-label="下一页"><NavGlyph d="M2 0v7l4-3.500z" /></NavButton>
          <NavButton type="button" aria-label="最后一页"><NavGlyph d="M1 0v7l4-3.500zM5.500 0H7v7H5.500z" /></NavButton>
          <ModelTab type="button">模型</ModelTab>
        </ModelRow>
        <OptionRow>
          <OptionBar>
            <Grip />
            <OptionLabel htmlFor="break-mode">1:</OptionLabel>
            <OptionSelect id="break-mode"><option>一点打断</option></OptionSelect>
            <Caret />
          </OptionBar>
        </OptionRow>
        <StatusBar>
          <Prompt>拾取曲线:</Prompt>
          <StatusDivider />
          <StatusCell $width={84} $latin>Break BR</StatusCell>
          <StatusCell $width={156} $latin>X:-84.307, Y:240.495</StatusCell>
          <StatusCell $width={78}>屏幕点</StatusCell>
          <StatusButton type="button">正交</StatusButton>
          <StatusButton type="button" $on>线宽</StatusButton>
          <StatusButton type="button">动态输入</StatusButton>
          <SplitStatus type="button">智能<Caret /></SplitStatus>
        </StatusBar>
        <OptionMark />
      </Footer>
    </Frame>
  );
}
